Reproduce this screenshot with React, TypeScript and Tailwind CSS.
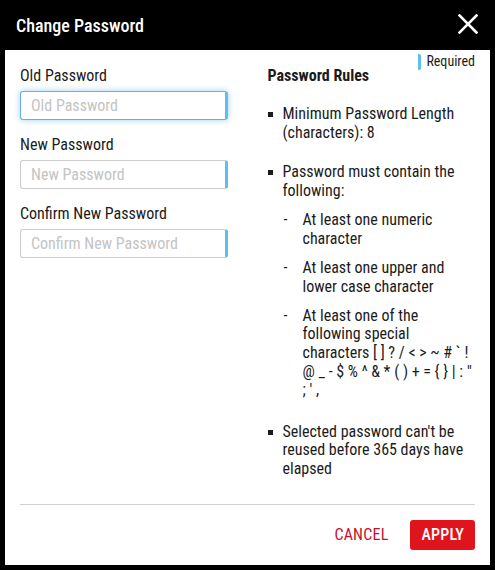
const font = "[font-family:Roboto,'Liberation_Sans',sans-serif] [font-stretch:87.5%]"

const fields = [
  { label: "Old Password", focused: true },
  { label: "New Password", focused: false },
  { label: "Confirm New Password", focused: false },
]

const subRules = [
  "At least one numeric character",
  "At least one upper and lower case character",
  "At least one of the following special characters [ ] ? / < > ~ # ` ! @ _ - $ % ^ & * ( ) + = { } | : \" ; ' ,",
]

function Field({ label, focused }: { label: string; focused: boolean }) {
  return (
    <div className="mb-[15px]">
      <label className="mb-[6px] block text-[16px] leading-[19px] text-[#1b1b1b]">{label}</label>
      <input
        type="password"
        placeholder={label}
        className={
          focused
            ? "block h-[29px] w-full rounded-[3px] border border-r-[3px] border-[#66afe9] border-r-[#5bc0eb] px-[10px] text-[16px] shadow-[0_0_6px_rgba(102,175,233,0.6)] outline-none placeholder:text-[#c4c4c4]"
            : "block h-[29px] w-full rounded-[3px] border border-r-[3px] border-[#cccccc] border-r-[#5bc0eb] px-[10px] text-[16px] outline-none placeholder:text-[#c4c4c4]"
        }
      />
    </div>
  )
}

export default function App() {
  return (
    <div className={`${font} flex h-[570px] w-[495px] flex-col bg-black px-[5px] pb-[5px]`}>
      <div className="flex h-[50px] shrink-0 items-center justify-between pl-[11px] pr-[12px]">
        <h1 className="text-[18px] font-medium text-white">Change Password</h1>
        <svg width="20" height="20" viewBox="0 0 20 20" className="-mt-[3px]" fill="none" stroke="white" strokeWidth="2.6" strokeLinecap="square">
          <path d="M1.5 1.5 18.5 18.5M18.5 1.5 1.5 18.5" />
        </svg>
      </div>
      <div className="relative flex flex-1 flex-col bg-white px-[15px]">
        <div className="absolute right-[15px] top-[3px] flex items-center gap-[5px] text-[14px] leading-[17px] text-[#1b1b1b]">
          <span className="h-[16px] w-[3px] rounded-r-[2px] bg-[#5bc0eb]" />
          Required
        </div>
        <div className="grid flex-1 grid-cols-2 gap-[40px] pt-[16px]">
          <div>
            {fields.map((f) => (
              <Field key={f.label} label={f.label} focused={f.focused} />
            ))}
          </div>
          <div className="text-[16px] leading-[18.6px] text-[#1b1b1b]">
            <h2 className="mb-[20px] font-bold leading-[19px]">Password Rules</h2>
            <ul>
              <li className="relative mb-[21px] pl-[15px]">
                <span className="absolute left-0 top-[7px] h-[5px] w-[5px] bg-[#1b1b1b]" />
                Minimum Password Length (characters): 8
              </li>
              <li className="relative mb-[23px] pl-[15px]">
                <span className="absolute left-0 top-[7px] h-[5px] w-[5px] bg-[#1b1b1b]" />
                Password must contain the following:
                <ul className="mt-[11px]">
                  {subRules.map((r) => (
                    <li key={r} className="relative mb-[10.5px] pl-[20px] last:mb-0">
                      <span className="absolute left-[1px] top-0">-</span>
                      {r}
                    </li>
                  ))}
                </ul>
              </li>
              <li className="relative pl-[15px]">
                <span className="absolute left-0 top-[7px] h-[5px] w-[5px] bg-[#1b1b1b]" />
                Selected password can't be reused before 365 days have elapsed
              </li>
            </ul>
          </div>
        </div>
        <div className="flex items-center justify-end gap-[22px] border-t border-[#d0d0d0] pb-[15px] pt-[15px]">
          <button className="text-[16px] tracking-[0.2px] text-[#c8102e]">CANCEL</button>
          <button className="h-[30px] rounded-[3px] bg-[#e0141c] px-[11px] text-[16px] font-medium tracking-[0.2px] text-white">
            APPLY
          </button>
        </div>
      </div>
    </div>
  )
}
